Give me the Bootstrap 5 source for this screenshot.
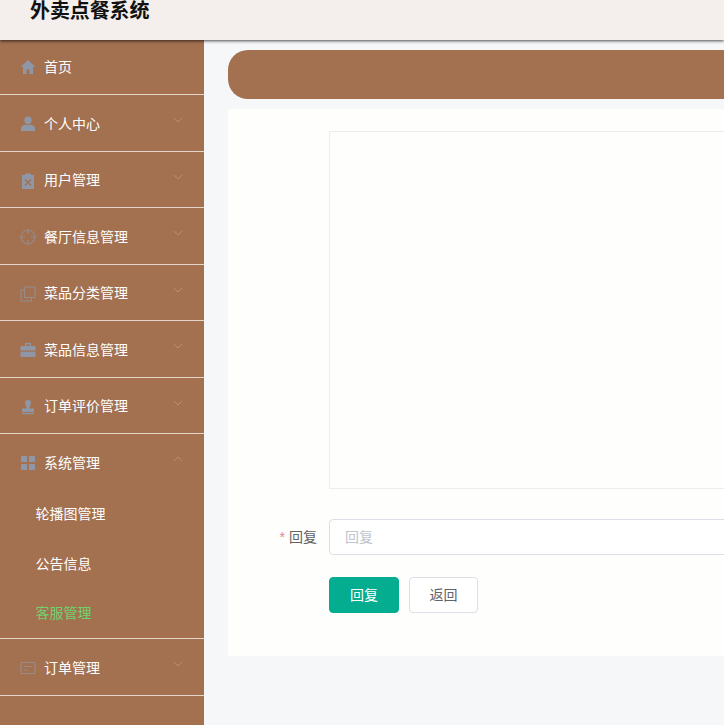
<!DOCTYPE html>
<html lang="zh-CN">
<head>
  <meta charset="UTF-8" />
  <meta name="viewport" content="width=device-width, initial-scale=1.0"/>
  <title>外卖点餐系统</title>
  <link rel="stylesheet" href="https://cdn.jsdelivr.net/npm/bootstrap@5.3.0/dist/css/bootstrap.min.css" crossorigin="anonymous" />
  <style>
    html, body { height: 725px; overflow: hidden; }
    body { font-family: "Liberation Sans", "Noto Sans CJK SC", sans-serif; background: #f5f7f9; font-size: 14px; color: #606266; }
    .top-bar { height: 40px; background: #f4efec; box-shadow: 0 1px 3px rgba(0,0,0,.7); position: relative; z-index: 2; padding-left: 30px; padding-top: 1px; }
    .top-bar h1 { font-size: 20px; font-weight: 700; line-height: 21px; margin: 0; color: #111; letter-spacing: -.1px; }
    .side { width: 204px; height: 685px; background: #a37050; flex: none; overflow: hidden; }
    .side-item { height: 56.5px; border-bottom: 1px solid #e4d5ca; padding: 3px 21px 0 20px; color: #fff; }
    .side-item.first { height: 55px; padding-top: 0; }
    .side-item .ico { width: 16px; height: 16px; margin-right: 8px; fill: #8f97a6; flex: none; }
    .side-item .ico.line { fill: none; stroke: #968b8a; stroke-width: 1.2; }
    .side-item .arrow { width: 10px; height: 6px; margin-top: -8px; stroke: #b98d70; fill: none; stroke-width: 1; }
    .side-item.open { height: 55px; border-bottom: 0; }
    .side-sub { height: 49.5px; padding: 2px 0 0 35.5px; color: #fff; }
    .side-sub.active { color: #6fd36f; }
    .side-group { border-bottom: 1px solid #e4d5ca; }
    .side-item.last { height: 57px; }
    .content { padding: 10px 0 0 24px; overflow: hidden; min-width: 0; }
    .crumb { width: 800px; height: 49px; background: #a37050; border-radius: 20px; }
    .panel { width: 800px; height: 547px; margin-top: 10px; background: #fefefd; padding: 22px 0 0 101px; }
    .msg-box { height: 358px; border: 1px solid #eeeeee; }
    .reply-row { margin-top: 30px; position: relative; }
    .reply-label { position: absolute; right: 100%; width: 60px; padding-right: 12px; text-align: right; line-height: 36px; color: #606266; }
    .reply-label span { color: #e08a8a; margin-right: 4px; }
    .reply-input { height: 36px; border: 1px solid #dcdfe6; border-radius: 4px; padding: 0 15px; font-size: 14px; }
    .reply-input::placeholder { color: #c0c4cc; }
    .reply-btns { gap: 10px; margin-top: 22px; }
    .btn-reply, .btn-back { width: 69px; height: 36px; padding: 0; font-size: 14px; border-radius: 4px; }
    .btn-reply { width: 70px; background: #04ac90; border-color: #04ac90; color: #fff; }
    .btn-back { background: #fff; border: 1px solid #dcdfe6; color: #606266; }
  </style>
</head>
<body>

  <!-- Top bar -->
  <header class="top-bar">
    <h1>外卖点餐系统</h1>
  </header>

  <div class="d-flex">
    <!-- Side menu -->
    <nav class="side">
      <div class="side-item first d-flex align-items-center">
        <svg class="ico" viewBox="0 0 16 16"><path d="M8 1 0.5 8H3v7h3.500v-4.500h3V15H13V8h2.500z"/></svg>
        <span>首页</span>
      </div>
      <div class="side-item d-flex align-items-center justify-content-between">
        <span class="d-flex align-items-center">
          <svg class="ico" viewBox="0 0 16 16"><circle cx="8" cy="4.200" r="3.700"/><path d="M1 15v-2.500C1 10 3.500 8.800 5.500 8.800h5c2 0 4.500 1.200 4.500 3.700V15z"/></svg>
          个人中心
        </span>
        <svg class="arrow" viewBox="0 0 10 6"><path d="M1 1l4 4 4-4"/></svg>
      </div>
      <div class="side-item d-flex align-items-center justify-content-between">
        <span class="d-flex align-items-center">
          <svg class="ico" viewBox="0 0 16 16"><path d="M5 0.500h6V2h3v14H2V2h3zM5.500 6l-1 1L7 9.500 4.500 12l1 1L8 10.500l2.500 2.500 1-1L9 9.500 11.500 7l-1-1L8 8.500z"/></svg>
          用户管理
        </span>
        <svg class="arrow" viewBox="0 0 10 6"><path d="M1 1l4 4 4-4"/></svg>
      </div>
      <div class="side-item d-flex align-items-center justify-content-between">
        <span class="d-flex align-items-center">
          <svg class="ico line" viewBox="0 0 16 16"><circle cx="8" cy="8" r="7"/><path d="M8 0v5M8 11v5M0 8h5M11 8h5"/></svg>
          餐厅信息管理
        </span>
        <svg class="arrow" viewBox="0 0 10 6"><path d="M1 1l4 4 4-4"/></svg>
      </div>
      <div class="side-item d-flex align-items-center justify-content-between">
        <span class="d-flex align-items-center">
          <svg class="ico line" viewBox="0 0 16 16"><path d="M4.500 1h10.500v10.500H4.500z"/><path d="M4.500 4H1v11h10.500v-3.500"/></svg>
          菜品分类管理
        </span>
        <svg class="arrow" viewBox="0 0 10 6"><path d="M1 1l4 4 4-4"/></svg>
      </div>
      <div class="side-item d-flex align-items-center justify-content-between">
        <span class="d-flex align-items-center">
          <svg class="ico" viewBox="0 0 16 16"><path d="M5 1h6v3h4.500v4.500H.5V4H5zM6.300 2.300V4h3.400V2.300zM.5 9.800h15V15H.5z"/></svg>
          菜品信息管理
        </span>
        <svg class="arrow" viewBox="0 0 10 6"><path d="M1 1l4 4 4-4"/></svg>
      </div>
      <div class="side-item d-flex align-items-center justify-content-between">
        <span class="d-flex align-items-center">
          <svg class="ico" viewBox="0 0 16 16"><path d="M8 1a3 3 0 0 1 3 3c0 1.500-1.200 2.500-1.500 4v1.500H14V13H2V9.500h4.500V8C6.200 6.500 5 5.500 5 4a3 3 0 0 1 3-3zM2 14h12v1.300H2z"/></svg>
          订单评价管理
        </span>
        <svg class="arrow" viewBox="0 0 10 6"><path d="M1 1l4 4 4-4"/></svg>
      </div>

      <!-- Open group -->
      <div class="side-group">
        <div class="side-item open d-flex align-items-center justify-content-between">
          <span class="d-flex align-items-center">
            <svg class="ico" viewBox="0 0 16 16"><path d="M1 1h6v6H1zM9 1h6v6H9zM1 9h6v6H1zM9 9h6v6H9z"/></svg>
            系统管理
          </span>
          <svg class="arrow" viewBox="0 0 10 6"><path d="M1 5l4-4 4 4"/></svg>
        </div>
        <div class="side-sub d-flex align-items-center">轮播图管理</div>
        <div class="side-sub d-flex align-items-center">公告信息</div>
        <div class="side-sub active d-flex align-items-center">客服管理</div>
      </div>

      <div class="side-item last d-flex align-items-center justify-content-between">
        <span class="d-flex align-items-center">
          <svg class="ico line" viewBox="0 0 16 16"><rect x="1" y="2.500" width="14" height="11" rx="1"/><path d="M4 6.500h8M4 10h4"/></svg>
          订单管理
        </span>
        <svg class="arrow" viewBox="0 0 10 6"><path d="M1 1l4 4 4-4"/></svg>
      </div>
    </nav>

    <!-- Main content -->
    <main class="content flex-grow-1">
      <div class="crumb"></div>
      <div class="panel">
        <div class="msg-box"></div>
        <div class="reply-row">
          <label class="reply-label"><span>*</span>回复</label>
          <input class="form-control reply-input" type="text" placeholder="回复" />
        </div>
        <div class="reply-btns d-flex">
          <button class="btn btn-reply" type="button">回复</button>
          <button class="btn btn-back" type="button">返回</button>
        </div>
      </div>
    </main>
  </div>

  <script src="https://cdn.jsdelivr.net/npm/bootstrap@5.3.0/dist/js/bootstrap.bundle.min.js" crossorigin="anonymous"></script>
</body>
</html>
